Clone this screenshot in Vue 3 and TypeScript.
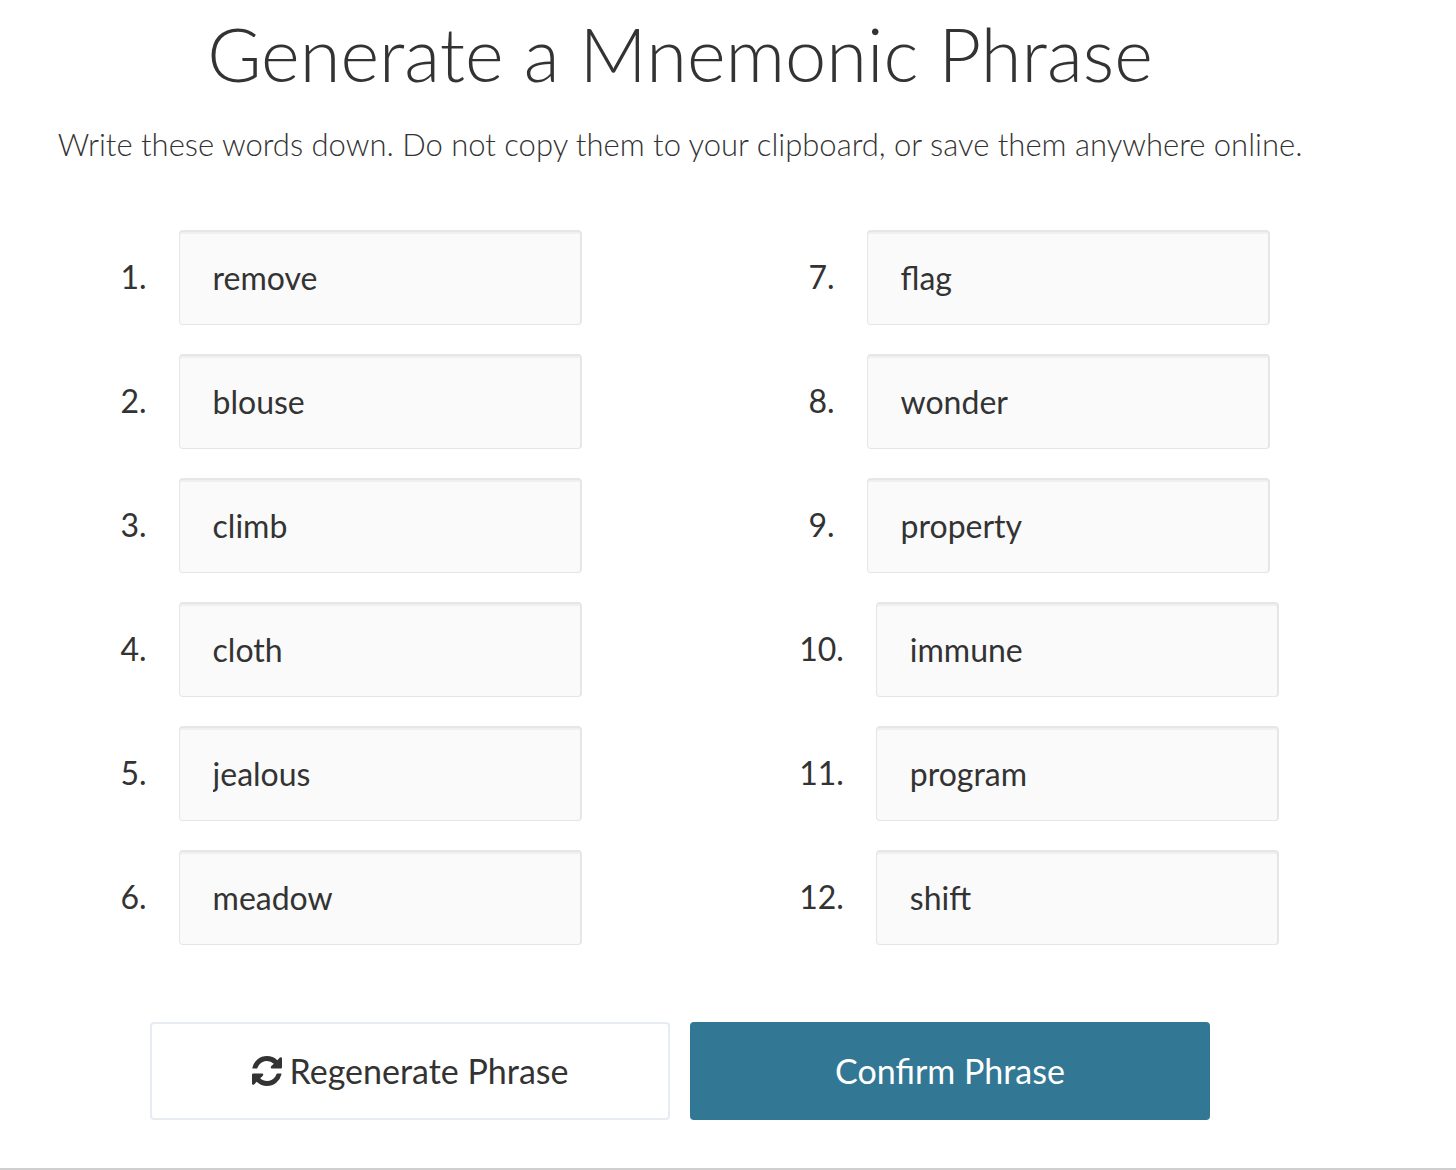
<script setup lang="ts">
import { ref } from 'vue'

const columns = ref<{ start: number; words: string[] }[]>([
  { start: 1, words: ['remove', 'blouse', 'climb', 'cloth', 'jealous', 'meadow'] },
  { start: 7, words: ['flag', 'wonder', 'property', 'immune', 'program', 'shift'] },
])
</script>

<template>
  <main class="page">
    <header>
      <h1>Generate a Mnemonic Phrase</h1>
      <p>Write these words down. Do not copy them to your clipboard, or save them anywhere online.</p>
    </header>
    <div class="columns">
      <div v-for="column in columns" :key="column.start" class="column">
        <div v-for="(word, i) in column.words" :key="word" class="row">
          <label :for="`word-${column.start + i}`">{{ column.start + i }}.</label>
          <input :id="`word-${column.start + i}`" type="text" readonly :value="word" />
        </div>
      </div>
    </div>
    <div class="actions">
      <button type="button" class="secondary">
        <svg viewBox="0 0 1536 1536" aria-hidden="true">
          <path d="M1511 928q0 5-1 7-64 268-268 434.500T764 1536q-146 0-282.500-55T238 1324l-129 129q-19 19-45 19t-45-19-19-45V960q0-26 19-45t45-19h448q26 0 45 19t19 45-19 45l-137 137q71 66 161 102t187 36q134 0 250-65t186-179q11-17 53-117 8-23 30-23h192q13 0 22.500 9.500t9.500 22.500zM1536 128v448q0 26-19 45t-45 19h-448q-26 0-45-19t-19-45 19-45l138-138Q969 256 768 256q-134 0-250 65T332 500q-11 17-53 117-8 23-30 23H50q-13 0-22.500-9.500T18 608v-7q65-268 270-434.500T768 0q146 0 284 55.500T1297 212l130-129q19-19 45-19t45 19 19 45z" />
        </svg>
        <span>Regenerate Phrase</span>
      </button>
      <button type="button" class="primary"><span>Confirm Phrase</span></button>
    </div>
  </main>
</template>

<style>
body {
  background: #fff;
}
</style>

<style scoped>
.page {
  padding: 14px 0 48px;
  border-bottom: 2px solid #cfcfcf;
  color: #333;
  font-family: Lato, sans-serif;
}
header {
  padding-right: 96px;
  text-align: center;
}
h1 {
  margin: 0;
  font-size: 74px;
  line-height: 80px;
  font-weight: 300;
}
p {
  margin: 26px 0 0;
  font-size: 31px;
  line-height: 48px;
  font-weight: 300;
}
.columns {
  display: flex;
  margin-top: 62px;
  padding: 0 73px 0 7px;
}
.column {
  flex: 1;
  display: flex;
  flex-direction: column;
  align-items: center;
  gap: 29px;
}
.row {
  display: flex;
  align-items: center;
  gap: 32px;
  font-size: 32px;
}
label {
  line-height: 40px;
  padding-bottom: 2px;
}
input {
  box-sizing: border-box;
  width: 403px;
  height: 95px;
  padding: 0 32px 2px 33px;
  border: solid #e6e6e6;
  border-width: 2px 2px 1px 1px;
  border-radius: 4px;
  background: #fafafa;
  box-shadow: inset 0 2px 0 #f0f0f0;
  color: #333;
  font: 32px Lato, sans-serif;
}
.actions {
  display: flex;
  justify-content: center;
  gap: 20px;
  margin-top: 77px;
  padding-right: 96px;
}
button {
  box-sizing: border-box;
  display: flex;
  align-items: center;
  justify-content: center;
  gap: 8px;
  width: 520px;
  height: 98px;
  padding: 0;
  border-radius: 4px;
  font: 34px Lato, sans-serif;
}
button span {
  padding-bottom: 2px;
}
.secondary {
  border: 2px solid #e6ecf1;
  background: #fff;
  color: #333;
}
.primary {
  border: 0;
  background: #327895;
  color: #fff;
}
svg {
  width: 30px;
  height: 30px;
  fill: #333;
}
</style>
